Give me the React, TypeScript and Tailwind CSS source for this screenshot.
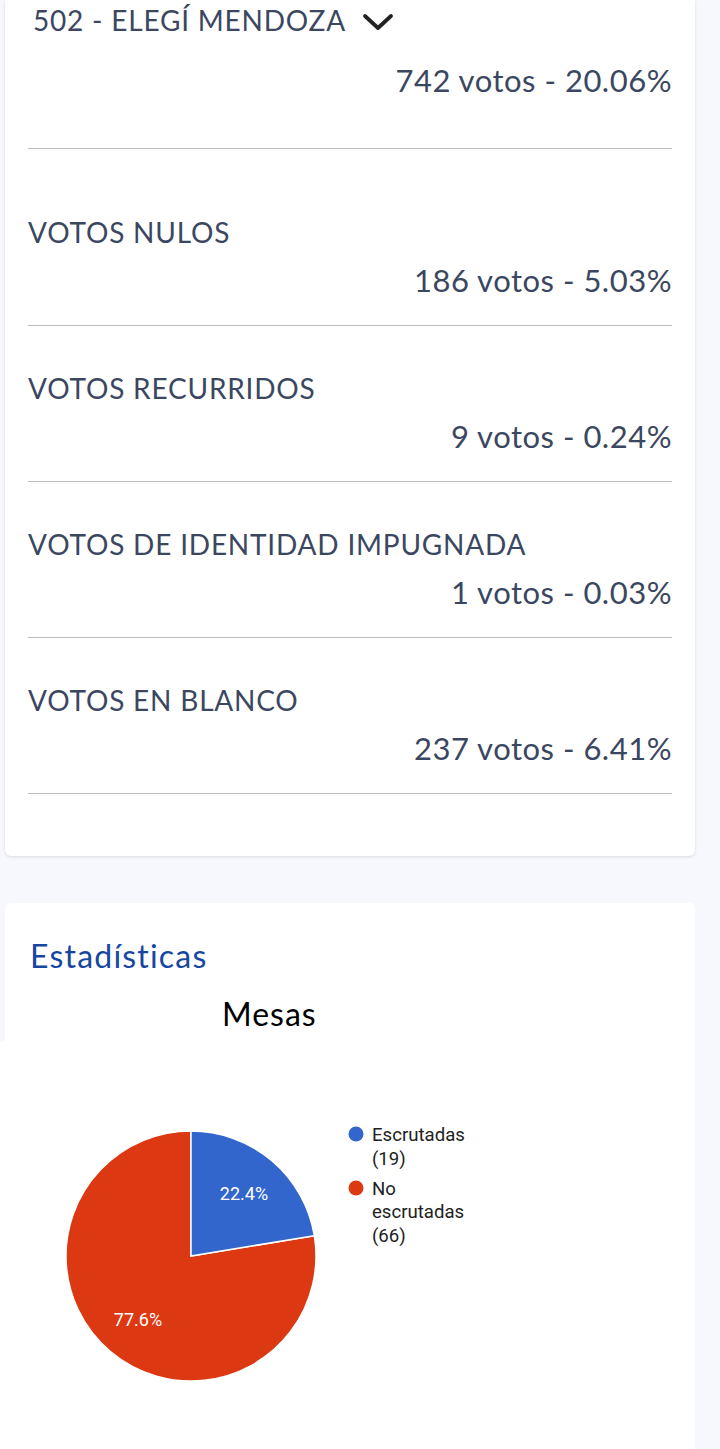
import React from "react";

const font = { fontFamily: "Lato, 'Open Sans', sans-serif" };

function Row({ label, value, first }: { label: string; value: string; first?: boolean }) {
  return (
    <div>
      <div className={first ? "mt-[67px] h-[32px] leading-[32px] text-[28px] tracking-[0.8px]" : "mt-[46px] h-[32px] leading-[32px] text-[28px] tracking-[0.8px]"}>{label}</div>
      <div className="mt-[16px] h-[32px] leading-[32px] text-[31px] tracking-[0.5px] text-right">{value}</div>
      <div className="mt-[29px] h-px bg-[#bdbdbd]" />
    </div>
  );
}

export default function App() {
  const cx = 191, cy = 215, r = 125;
  const a = 0.224 * 2 * Math.PI;
  const ex = cx + r * Math.sin(a);
  const ey = cy - r * Math.cos(a);
  return (
    <div className="h-[1449px] w-[720px] bg-[#f7f8fd] overflow-hidden" style={font}>
      <div className="ml-[5px] w-[690px] bg-white rounded-b-md shadow-[0_1px_3px_rgba(0,0,0,0.12)] pl-[23px] pr-[23px] pb-[62px] text-[#3b4761]">
        <div className="pt-[4px] h-[36px] flex items-center pl-[5px] gap-[16px] text-[28px] tracking-[0.8px]">
          <span className="leading-[32px] h-[32px]">502 - ELEGÍ MENDOZA</span>
          <svg width="32" height="20" viewBox="0 0 32 20" className="mt-[4px]">
            <path d="M3 4 L16 16 L29 4" fill="none" stroke="#222" strokeWidth="3.8" strokeLinecap="round" strokeLinejoin="round" />
          </svg>
        </div>
        <div className="mt-[28px] h-[32px] leading-[32px] text-[31px] tracking-[0.5px] text-right">742 votos - 20.06%</div>
        <div className="mt-[52px] h-px bg-[#bdbdbd]" />
        <Row first label="VOTOS NULOS" value="186 votos - 5.03%" />
        <Row label="VOTOS RECURRIDOS" value="9 votos - 0.24%" />
        <Row label="VOTOS DE IDENTIDAD IMPUGNADA" value="1 votos - 0.03%" />
        <Row label="VOTOS EN BLANCO" value="237 votos - 6.41%" />
      </div>

      <div className="mt-[47px] ml-[5px] w-[690px] bg-white rounded-t-md">
        <div className="pt-[35px] pl-[25px] h-[71px] text-[32px] leading-[36px] tracking-[1.2px] text-[#1746a2]">Estadísticas</div>
        <div className="mt-[22px] h-[36px] leading-[36px] text-[32px] tracking-[1px] text-black pl-[217px]">Mesas</div>
        <div className="-ml-[5px] mt-[9px] w-[695px] h-[420px] bg-white">
          <svg width="695" height="420" viewBox="0 0 695 420" style={{ fontFamily: "Roboto, sans-serif" }}>
            <path d={`M${cx},${cy} L${ex},${ey} A${r},${r} 0 1 1 ${cx},${cy - r} Z`} fill="#dc3912" stroke="#fff" strokeWidth="1.5" />
            <path d={`M${cx},${cy} L${cx},${cy - r} A${r},${r} 0 0 1 ${ex},${ey} Z`} fill="#3366cc" stroke="#fff" strokeWidth="1.5" />
            <text x="244" y="159" fill="#fff" fontSize="18" textAnchor="middle">22.4%</text>
            <text x="138" y="285" fill="#fff" fontSize="18" textAnchor="middle">77.6%</text>
            <circle cx="356" cy="93" r="7.5" fill="#3366cc" />
            <text x="372" y="100" fill="#222" fontSize="18.6">Escrutadas</text>
            <text x="372" y="124" fill="#222" fontSize="18.6">(19)</text>
            <circle cx="356" cy="147" r="7.5" fill="#dc3912" />
            <text x="372" y="154" fill="#222" fontSize="18.6">No</text>
            <text x="372" y="177" fill="#222" fontSize="18.6">escrutadas</text>
            <text x="372" y="201" fill="#222" fontSize="18.6">(66)</text>
          </svg>
        </div>
      </div>
    </div>
  );
}
